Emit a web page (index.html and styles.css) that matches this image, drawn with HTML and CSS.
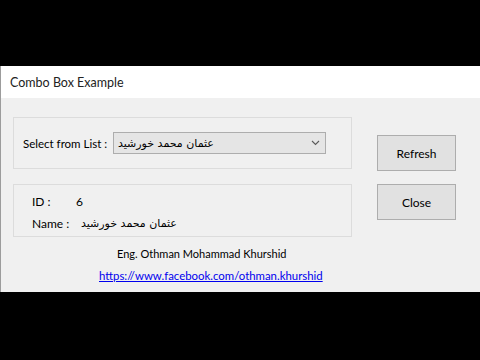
FILE: index.html
```html
<!DOCTYPE html>
<html>
<head>
<meta charset="utf-8">
<link rel="stylesheet" href="styles.css">
</head>
<body>
<div class="window">
  <div class="titlebar">Combo Box Example</div>
  <div class="content">
    <div class="left">
      <div class="group group-select">
        <span class="select-label">Select from List :</span>
        <div class="combo">
          <span class="arabic" dir="rtl">عثمان محمد خورشيد</span>
          <svg class="chev" width="9" height="6" viewBox="0 0 9 6"><path d="M1 1 L4.5 4.5 L8 1" fill="none" stroke="#5a5a5a" stroke-width="1.1"/></svg>
        </div>
      </div>
      <div class="group group-info">
        <div class="row"><span class="lbl lbl-id">ID :</span><span class="val">6</span></div>
        <div class="row"><span class="lbl lbl-name">Name :</span><span class="arabic" dir="rtl">عثمان محمد خورشيد</span></div>
      </div>
    </div>
    <div class="right">
      <div class="btn">Refresh</div>
      <div class="btn">Close</div>
    </div>
  </div>
  <div class="footer">
    <div class="author">Eng. Othman Mohammad Khurshid</div>
    <div class="link-line"><a class="link" href="#">https://www.facebook.com/othman.khurshid</a></div>
  </div>
</div>
</body>
</html>
```
FILE: styles.css
```css
html, body {
  margin: 0;
  padding: 0;
  background: #000;
  width: 480px;
  height: 360px;
  overflow: hidden;
}
.window {
  margin-top: 66px;
  height: 226px;
  background: #f0f0f0;
  border-left: 1px solid #9c9c9c;
  box-sizing: border-box;
  font-family: Lato, "Liberation Sans", sans-serif;
  font-size: 12px;
  color: #000;
}
.titlebar {
  height: 32px;
  background: #fff;
  display: flex;
  align-items: center;
  padding-left: 9px;
  font-size: 12.5px;
  color: #222;
}
.content {
  display: flex;
  padding: 19px 0 0 12px;
}
.left {
  width: 339px;
  display: flex;
  flex-direction: column;
  gap: 15px;
}
.group {
  border: 1px solid #dcdcdc;
  box-sizing: border-box;
}
.group-select {
  height: 52px;
  display: flex;
  align-items: center;
  padding-left: 9px;
}
.select-label {
  width: 90px;
  flex: none;
  white-space: nowrap;
  font-size: 11.5px;
}
.combo {
  width: 213px;
  height: 22px;
  box-sizing: border-box;
  border: 1px solid #adadad;
  background: #e5e5e5;
  display: flex;
  align-items: center;
  justify-content: space-between;
  padding: 0 5px 0 4px;
}
.arabic {
  font-family: "DejaVu Sans", "Noto Sans", sans-serif;
  font-size: 11px;
}
.chev {
  display: block;
}
.group-info {
  height: 53px;
  padding: 5px 0 0 18px;
}
.row {
  display: flex;
  align-items: center;
  height: 22px;
}
.lbl-id { width: 44px; }
.lbl-name { width: 49px; }
.right {
  margin-left: 25px;
  padding-top: 18px;
  display: flex;
  flex-direction: column;
  gap: 13px;
}
.btn {
  width: 79px;
  height: 36px;
  box-sizing: border-box;
  border: 1px solid #adadad;
  background: #e1e1e1;
  display: flex;
  align-items: center;
  justify-content: center;
}
.footer {
  margin-top: 6px;
}
.author {
  height: 22px;
  line-height: 22px;
  padding-left: 116px;
  font-size: 11px;
}
.link-line {
  height: 22px;
  line-height: 22px;
  padding-left: 98px;
  font-size: 11.4px;
}
.link {
  color: #0000ee;
  text-decoration: underline;
}
```
